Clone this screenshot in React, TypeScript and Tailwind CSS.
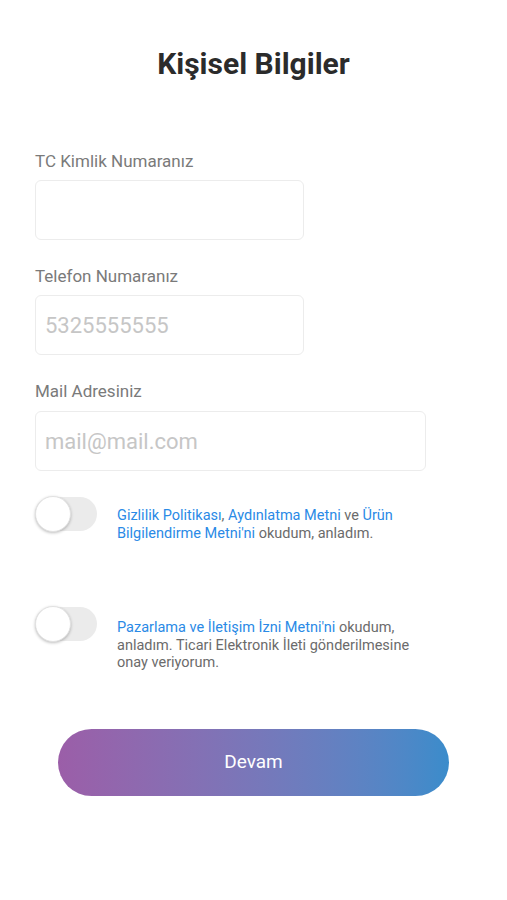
import React from "react";

function Toggle() {
  return (
    <div className="relative w-[62px] h-[36px] shrink-0">
      <div className="absolute left-0 top-[1px] w-[62px] h-[34px] rounded-full bg-[#ebebeb]" />
      <div className="absolute left-0 top-0 w-[36px] h-[36px] rounded-full bg-white shadow-[0_1px_3px_rgba(0,0,0,0.25)] border border-[#e2e2e2]" />
    </div>
  );
}

export default function App() {
  const font = { fontFamily: "Roboto, 'Noto Sans', sans-serif" };
  return (
    <div className="w-[507px] h-[900px] bg-white" style={font}>
      <h1 className="pt-[47px] text-center text-[30px] leading-[34px] font-bold text-[#2b2b2b]">
        Kişisel Bilgiler
      </h1>
      <div className="px-[35px] pt-[70px] flex flex-col">
        <label className="text-[17px] leading-[20px] text-[#7a7a7a] mb-[9px]">TC Kimlik Numaranız</label>
        <input
          className="w-[269px] h-[60px] rounded-[6px] border border-[#ececec] px-[9px] text-[22px] outline-none placeholder:text-[#c6c6c6]"
        />
        <label className="mt-[26px] text-[17px] leading-[20px] text-[#7a7a7a] mb-[9px]">Telefon Numaranız</label>
        <input
          placeholder="5325555555"
          className="w-[269px] h-[60px] rounded-[6px] border border-[#ececec] px-[9px] text-[22px] outline-none placeholder:text-[#c6c6c6]"
        />
        <label className="mt-[26px] text-[17px] leading-[20px] text-[#7a7a7a] mb-[10px]">Mail Adresiniz</label>
        <input
          placeholder="mail@mail.com"
          className="w-[391px] h-[60px] rounded-[6px] border border-[#ececec] px-[9px] text-[22px] outline-none placeholder:text-[#c6c6c6]"
        />
        <div className="mt-[25px] flex items-start gap-[20px]">
          <Toggle />
          <p className="mt-[11px] w-[309px] text-[14.5px] leading-[18px] text-[#6b6b6b]">
            <span className="text-[#2a8ae6]">Gizlilik Politikası</span>,{" "}
            <span className="text-[#2a8ae6]">Aydınlatma Metni</span> ve{" "}
            <span className="text-[#2a8ae6]">Ürün Bilgilendirme Metni'ni</span> okudum, anladım.
          </p>
        </div>
        <div className="mt-[63px] flex items-start gap-[20px]">
          <Toggle />
          <p className="mt-[13px] w-[309px] text-[14.5px] leading-[17.7px] text-[#6b6b6b]">
            <span className="text-[#2a8ae6]">Pazarlama ve İletişim İzni Metni'ni</span> okudum, anladım.
            Ticari Elektronik İleti gönderilmesine onay veriyorum.
          </p>
        </div>
      </div>
      <div className="mt-[57px] flex justify-center">
        <button className="w-[391px] h-[67px] rounded-full bg-gradient-to-r from-[#9b5ea8] to-[#3a8ccb] text-white text-[19px]">
          Devam
        </button>
      </div>
    </div>
  );
}
